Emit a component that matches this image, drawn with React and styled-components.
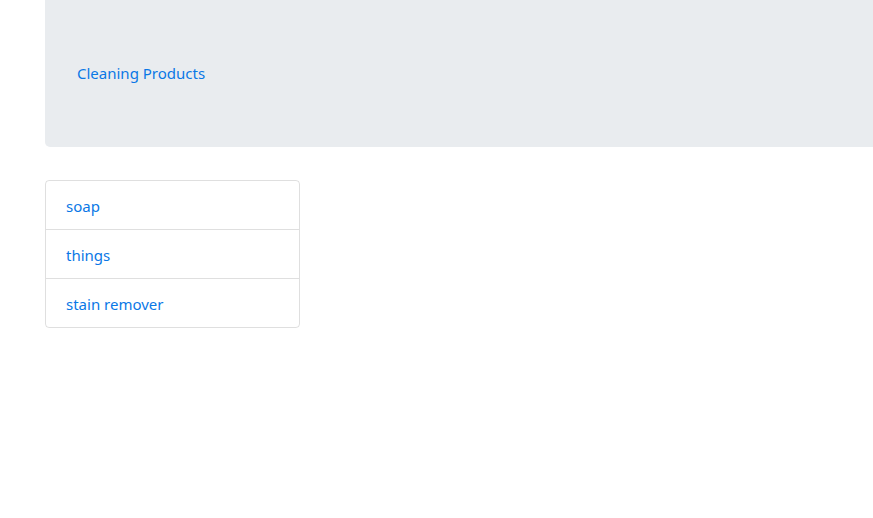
import React from "react";
import styled, { createGlobalStyle } from "styled-components";

const Global = createGlobalStyle`
  html, body { margin: 0; padding: 0; background: #fff; overflow: hidden; }
  body { font-family: "Noto Sans", "Open Sans", sans-serif; font-size: 15px; line-height: 24px; color: #212529; }
`;

const Page = styled.div`
  padding-left: 45px;
  width: 873px;
  box-sizing: border-box;
`;

const Jumbotron = styled.div`
  background: #e9ecef;
  padding: 61px 32px 62px;
  margin-right: -40px;
  margin-bottom: 33px;
  border-radius: 0 0 0 5px;
`;

const Link = styled.a`
  color: #0a78e6;
  text-decoration: none;
  font-size: 15px;
`;

const ListGroup = styled.ul`
  list-style: none;
  margin: 0;
  padding: 0;
  width: 255px;
  box-sizing: border-box;
  border: 1px solid rgba(0, 0, 0, 0.125);
  border-radius: 4px;
`;

const ListItem = styled.li`
  padding: 13px 20px 11px;
  line-height: 24px;
  & + & { border-top: 1px solid rgba(0, 0, 0, 0.125); }
`;

export default function App() {
  const items = ["soap", "things", "stain remover"];
  return (
    <>
      <Global />
      <Page>
        <Jumbotron>
          <Link href="#">Cleaning Products</Link>
        </Jumbotron>
        <ListGroup>
          {items.map((t) => (
            <ListItem key={t}>
              <Link href="#">{t}</Link>
            </ListItem>
          ))}
        </ListGroup>
      </Page>
    </>
  );
}
